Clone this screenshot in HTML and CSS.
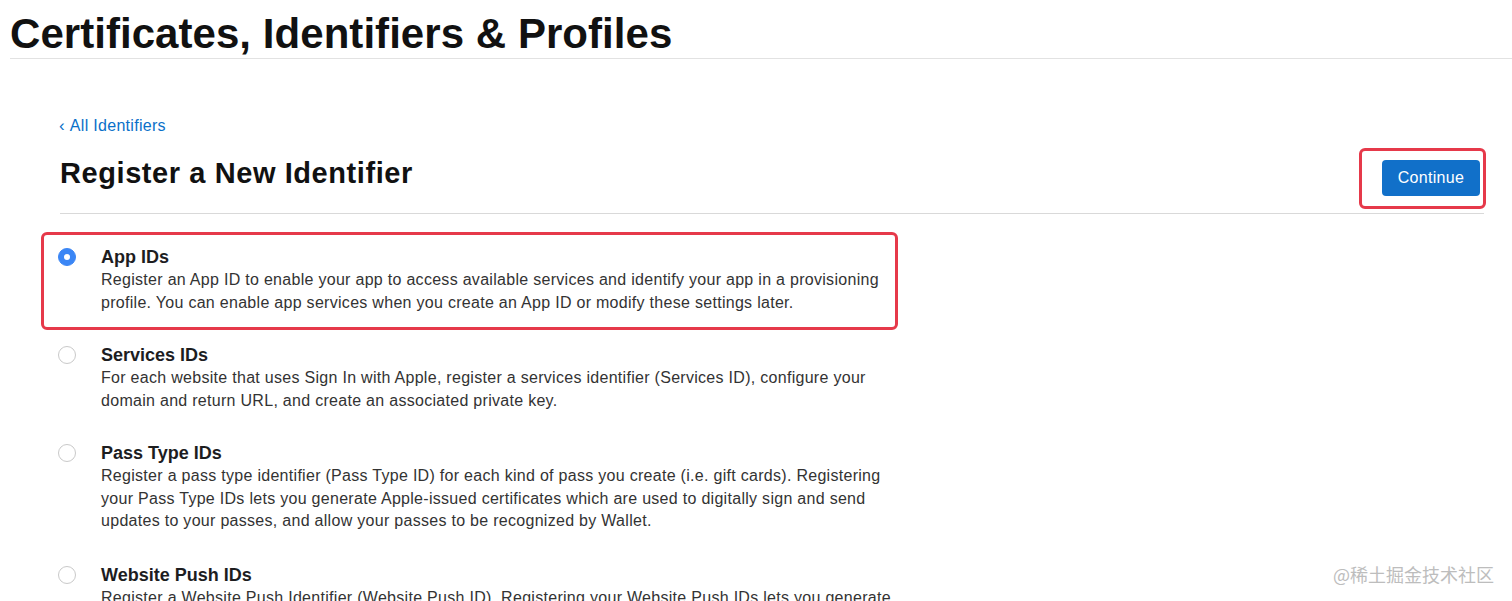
FILE: index.html
```html
<!DOCTYPE html>
<html lang="en">
<head>
<meta charset="utf-8">
<title>Register a New Identifier</title>
<link rel="stylesheet" href="styles.css">
</head>
<body>
<header class="top">
  <h1 class="top-title">Certificates, Identifiers &amp; Profiles</h1>
</header>
<main class="main">
  <a class="back" href="#"><span class="chev">&#8249;</span> All Identifiers</a>
  <div class="title-row">
    <h2 class="page-title">Register a New Identifier</h2>
    <div class="mark mark-btn">
      <button class="btn-primary" type="button">Continue</button>
    </div>
  </div>
  <div class="rule"></div>
  <div class="options">
    <div class="mark mark-opt">
      <label class="option">
        <span class="radio radio-on"></span>
        <span class="opt-body">
          <span class="opt-title">App IDs</span>
          <span class="opt-desc">Register an App ID to enable your app to access available services and identify your app in a provisioning<br>profile. You can enable app services when you create an App ID or modify these settings later.</span>
        </span>
      </label>
    </div>
    <label class="option">
      <span class="radio"></span>
      <span class="opt-body">
        <span class="opt-title">Services IDs</span>
        <span class="opt-desc">For each website that uses Sign In with Apple, register a services identifier (Services ID), configure your<br>domain and return URL, and create an associated private key.</span>
      </span>
    </label>
    <label class="option">
      <span class="radio"></span>
      <span class="opt-body">
        <span class="opt-title">Pass Type IDs</span>
        <span class="opt-desc">Register a pass type identifier (Pass Type ID) for each kind of pass you create (i.e. gift cards). Registering<br>your Pass Type IDs lets you generate Apple-issued certificates which are used to digitally sign and send<br>updates to your passes, and allow your passes to be recognized by Wallet.</span>
      </span>
    </label>
    <label class="option option-last">
      <span class="radio"></span>
      <span class="opt-body">
        <span class="opt-title">Website Push IDs</span>
        <span class="opt-desc">Register a Website Push Identifier (Website Push ID). Registering your Website Push IDs lets you generate<br>certificates which are used to send push notifications to your website.</span>
      </span>
    </label>
  </div>
</main>
<div class="watermark">@稀土掘金技术社区</div>
</body>
</html>
```

FILE: styles.css
```css
html, body {
  margin: 0;
  padding: 0;
  background: #ffffff;
  overflow: hidden;
}

body {
  font-family: "Liberation Sans", Arial, "Noto Sans CJK SC", sans-serif;
  color: #1d1d1f;
  height: 601px;
  position: relative;
}

.top {
  margin-left: 10px;
  padding: 10px 0 1px 0;
  border-bottom: 1px solid #e2e2e2;
}

.top-title {
  margin: 0;
  font-size: 42px;
  line-height: 47px;
  font-weight: 700;
  color: #111111;
  letter-spacing: 0.05px;
}

.main {
  padding: 57px 28px 0 60px;
}

.back {
  display: inline-block;
  font-size: 16px;
  line-height: 20px;
  color: #0a70c9;
  text-decoration: none;
  letter-spacing: 0.3px;
  margin-left: -1px;
}

.chev {
  font-size: 17px;
  margin-right: 1px;
}

.title-row {
  display: flex;
  justify-content: space-between;
  align-items: flex-start;
  margin-top: 12px;
}

.page-title {
  margin: 8px 0 0 0;
  font-size: 29px;
  line-height: 34px;
  font-weight: 700;
  letter-spacing: 0.58px;
  color: #111111;
}

.mark {
  border: 3px solid #e6394a;
  border-radius: 6px;
}

.mark-btn {
  padding: 9px 3px 10px 20px;
  margin-right: -2px;
}

.btn-primary {
  display: block;
  height: 36px;
  width: 98px;
  padding: 0;
  border: 0;
  border-radius: 4px;
  background: #1170c9;
  color: #ffffff;
  font-family: "Liberation Sans", Arial, sans-serif;
  font-size: 16px;
  letter-spacing: 0.3px;
  line-height: 36px;
}

.rule {
  height: 1px;
  background: #d9d9d9;
  margin-top: 4px;
}

.options {
  display: flex;
  flex-direction: column;
  padding-top: 18px;
}

.mark-opt {
  width: 837px;
  margin-left: -19px;
  padding: 10px 0 13px 14px;
  margin-bottom: 13px;
}

.option {
  display: flex;
  align-items: flex-start;
  margin-bottom: 29px;
}

.option-last {
  margin-top: 1px;
}

.mark-opt .option {
  margin-bottom: 0;
}

.radio {
  flex: none;
  width: 16px;
  height: 16px;
  border-radius: 50%;
  border: 1px solid #c9c9c9;
  background: #ffffff;
  margin-top: 3px;
  margin-left: -2px;
  margin-right: 25px;
  position: relative;
}

.mark-opt .radio {
  margin-left: 0;
}

.radio-on {
  background: #3b86f5;
  border-color: #3b86f5;
}

.radio-on::after {
  content: "";
  position: absolute;
  left: 5px;
  top: 5px;
  width: 6px;
  height: 6px;
  border-radius: 50%;
  background: #ffffff;
}

.opt-body {
  display: flex;
  flex-direction: column;
}

.opt-title {
  font-size: 18px;
  line-height: 24px;
  font-weight: 700;
  color: #1d1d1f;
}

.opt-desc {
  font-size: 16px;
  line-height: 22.5px;
  color: #333333;
  letter-spacing: 0.29px;
  white-space: nowrap;
}

.watermark {
  position: absolute;
  right: 18px;
  top: 563px;
  font-size: 18px;
  line-height: 22px;
  color: #bdbdbd;
  font-family: "Noto Sans CJK SC", "Liberation Sans", sans-serif;
}
```
